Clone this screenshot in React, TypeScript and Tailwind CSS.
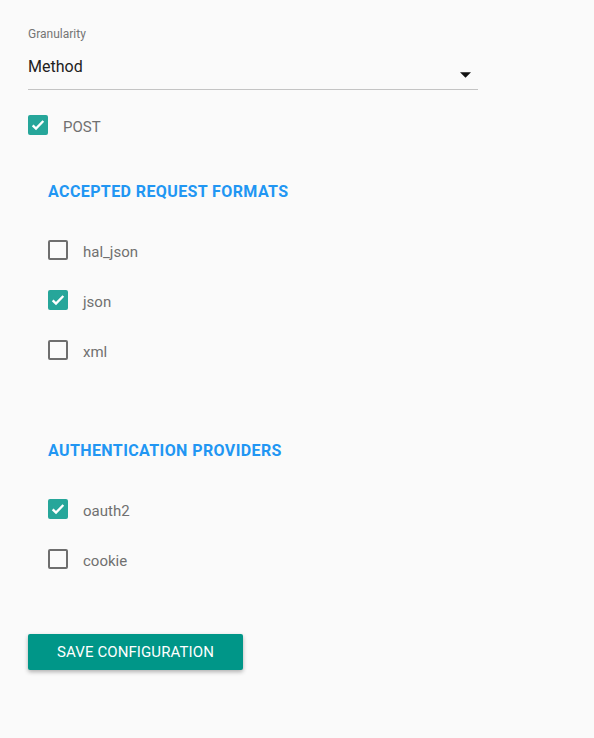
import { useState } from "react";

type Item = { name: string; checked: boolean };

const Checkbox = ({ checked, onClick }: { checked: boolean; onClick: () => void }) => (
  <button
    type="button"
    onClick={onClick}
    className={
      checked
        ? "w-[20px] h-[20px] rounded-[2px] bg-[#26a69a] flex items-center justify-center shrink-0"
        : "w-[20px] h-[20px] rounded-[2px] border-2 border-[#6e6e6e] shrink-0"
    }
  >
    {checked && (
      <svg width="16" height="16" viewBox="0 0 24 24" fill="none">
        <path d="M4 12.5l5 5L20 6" stroke="white" strokeWidth="3.5" />
      </svg>
    )}
  </button>
);

const Row = ({ item, onToggle }: { item: Item; onToggle: () => void }) => (
  <div className="h-[50px] flex items-center">
    <Checkbox checked={item.checked} onClick={onToggle} />
    <span className="ml-[15px] text-[15px] text-[#707070] pt-[4px]">{item.name}</span>
  </div>
);

const App = () => {
  const [post, setPost] = useState(true);
  const [formats, setFormats] = useState<Item[]>([
    { name: "hal_json", checked: false },
    { name: "json", checked: true },
    { name: "xml", checked: false },
  ]);
  const [auth, setAuth] = useState<Item[]>([
    { name: "oauth2", checked: true },
    { name: "cookie", checked: false },
  ]);

  const toggle = (list: Item[], i: number) =>
    list.map((it, idx) => (idx === i ? { ...it, checked: !it.checked } : it));

  return (
    <div className="min-h-[738px] bg-[#fafafa] pl-[28px] pt-[26px] font-['Roboto',sans-serif]">
      <div className="text-[12px] leading-[16px] text-[#757575]">Granularity</div>
      <div className="relative mt-[13px] w-[450px] h-[35px] border-b border-[#c4c4c4]">
        <div className="text-[16px] leading-[24px] text-[#212121]">Method</div>
        <svg className="absolute right-[7px] top-[17px]" width="11" height="6" viewBox="0 0 10 5">
          <path d="M0 0l5 5 5-5z" fill="#111" />
        </svg>
      </div>

      <div className="mt-[25px] h-[20px] flex items-center">
        <Checkbox checked={post} onClick={() => setPost(!post)} />
        <span className="ml-[15px] text-[15px] text-[#707070] pt-[4px]">POST</span>
      </div>

      <div className="ml-[20px]">
        <h3 className="mt-[47px] text-[16px] leading-[20px] font-bold tracking-[0.4px] text-[#2196f3]">
          ACCEPTED REQUEST FORMATS
        </h3>
        <div className="mt-[23px]">
          {formats.map((f, i) => (
            <Row key={f.name} item={f} onToggle={() => setFormats(toggle(formats, i))} />
          ))}
        </div>

        <h3 className="mt-[66px] text-[16px] leading-[20px] font-bold tracking-[0.4px] text-[#2196f3]">
          AUTHENTICATION PROVIDERS
        </h3>
        <div className="mt-[23px]">
          {auth.map((a, i) => (
            <Row key={a.name} item={a} onToggle={() => setAuth(toggle(auth, i))} />
          ))}
        </div>
      </div>

      <button className="mt-[50px] w-[215px] h-[36px] rounded-[2px] bg-[#009688] text-white text-[15px] font-normal tracking-[0.1px] shadow-[0_2px_4px_rgba(0,0,0,0.3)]">
        SAVE CONFIGURATION
      </button>
    </div>
  );
};

export default App;
